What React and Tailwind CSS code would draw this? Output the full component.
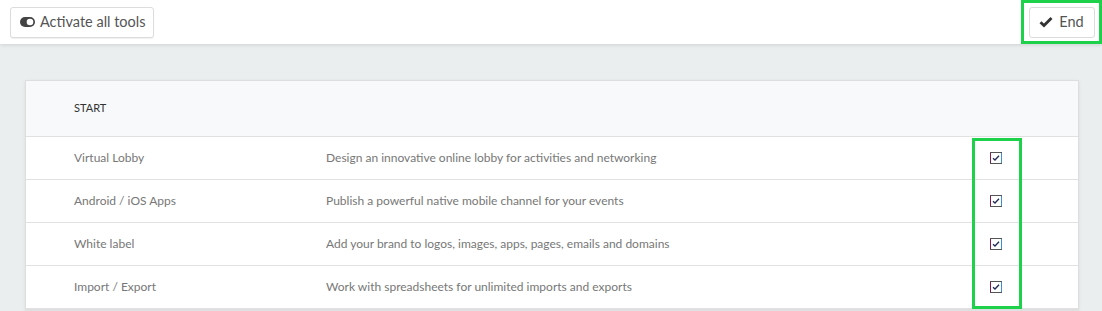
import React from 'react';

const rows = [
  { name: 'Virtual Lobby', desc: 'Design an innovative online lobby for activities and networking' },
  { name: 'Android / iOS Apps', desc: 'Publish a powerful native mobile channel for your events' },
  { name: 'White label', desc: 'Add your brand to logos, images, apps, pages, emails and domains' },
  { name: 'Import / Export', desc: 'Work with spreadsheets for unlimited imports and exports' },
];

const ToggleOn = () => (
  <svg width="15" height="10" viewBox="0 0 15 10">
    <rect x="0" y="0" width="15" height="10" rx="5" fill="#444" />
    <circle cx="10" cy="5" r="3.3" fill="#fff" />
  </svg>
);

const Check = () => (
  <svg width="14" height="12" viewBox="0 0 14 12">
    <path d="M1.5 6.2 L5 9.6 L12.5 2" fill="none" stroke="#333" strokeWidth="2.8" />
  </svg>
);

const Box = () => (
  <svg width="12" height="12" viewBox="0 0 12 12">
    <rect x="0.5" y="0.5" width="11" height="11" fill="#fff" stroke="#555" />
    <line x1="0.5" y1="1" x2="0.5" y2="11" stroke="#8a1a4a" />
    <line x1="11.5" y1="1" x2="11.5" y2="11" stroke="#3b8fd9" />
    <path d="M3 6.2 L5 8 L9 3.8" fill="none" stroke="#1f2a55" strokeWidth="1.3" />
  </svg>
);

export default function App() {
  return (
    <div className="w-[1102px] h-[311px] overflow-hidden bg-[#ebeeef] font-['Lato','Open_Sans',sans-serif]">
      <div className="h-[44px] bg-white flex items-center justify-between shadow-[0_1px_4px_rgba(0,0,0,0.12)] relative z-10">
        <button className="ml-[10px] h-[31px] pl-[9px] pr-[7px] flex items-center gap-[5px] border border-[#dcdcdc] rounded-[3px] bg-white text-[14.5px] text-[#555] shadow-[0_1px_1px_rgba(0,0,0,0.06)]">
          <ToggleOn />
          <span>Activate all tools</span>
        </button>
        <div className="h-[44px] w-[81px] border-[3px] border-[#1ed14b] flex items-center justify-center">
          <button className="h-[31px] w-[66px] flex items-center justify-center gap-[6px] border border-[#dcdcdc] rounded-[3px] bg-white text-[14.5px] text-[#555]">
            <Check />
            <span>End</span>
          </button>
        </div>
      </div>
      <div className="px-[25px] pt-[36px]">
        <div className="w-[1054px] bg-white border border-[#dedede] shadow-[0_1px_3px_rgba(0,0,0,0.08)] relative">
          <div className="h-[56px] bg-[#f8f9fa] border-b border-[#e1e1e1] flex items-center pl-[48px] text-[11px] text-[#333]">
            START
          </div>
          {rows.map((r, i) => (
            <div key={i} className="h-[43px] border-b border-[#e1e1e1] flex items-center text-[12px] text-[#777]">
              <div className="w-[300px] pl-[48px]">{r.name}</div>
              <div className="flex-1">{r.desc}</div>
              <div className="w-[109px] flex justify-center pr-[56px]">
                <Box />
              </div>
            </div>
          ))}
          <div className="absolute left-[946px] top-[57px] w-[50px] h-[171px] border-[3px] border-[#1ed14b] pointer-events-none" />
        </div>
      </div>
    </div>
  );
}
